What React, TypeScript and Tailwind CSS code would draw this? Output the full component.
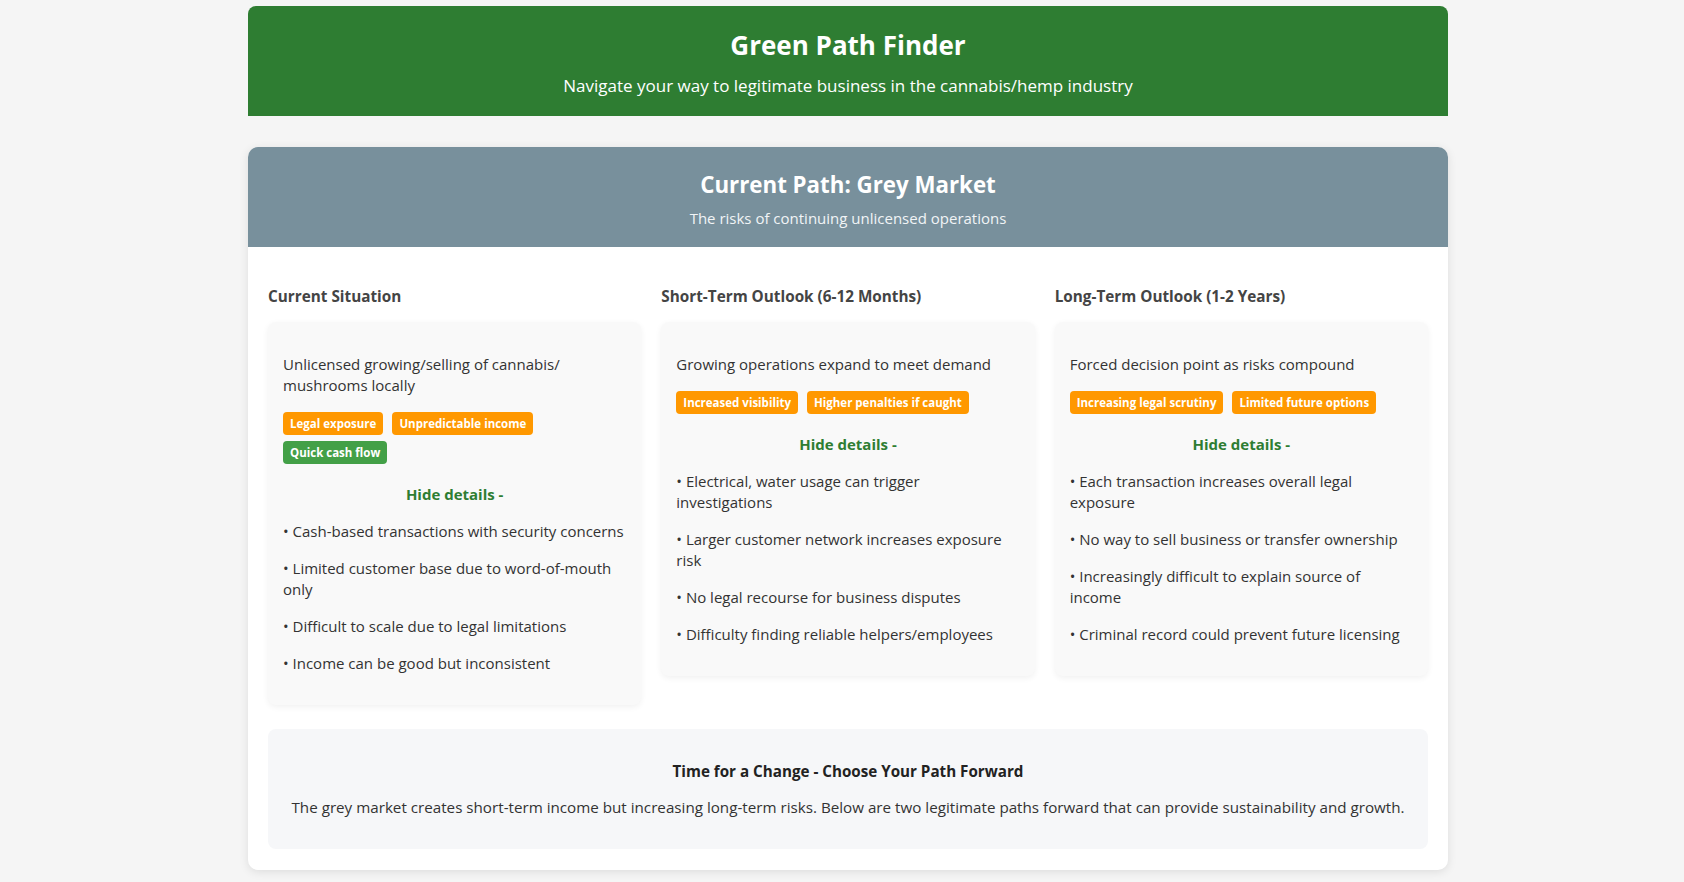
import React from "react";

type Tag = { label: string; tone: "warn" | "good" };

type Stage = {
  heading: string;
  summary: string;
  tags: Tag[];
  details: string[];
};

const stages: Stage[] = [
  {
    heading: "Current Situation",
    summary: "Unlicensed growing/selling of cannabis/ mushrooms locally",
    tags: [
      { label: "Legal exposure", tone: "warn" },
      { label: "Unpredictable income", tone: "warn" },
      { label: "Quick cash flow", tone: "good" },
    ],
    details: [
      "Cash-based transactions with security concerns",
      "Limited customer base due to word-of-mouth only",
      "Difficult to scale due to legal limitations",
      "Income can be good but inconsistent",
    ],
  },
  {
    heading: "Short-Term Outlook (6-12 Months)",
    summary: "Growing operations expand to meet demand",
    tags: [
      { label: "Increased visibility", tone: "warn" },
      { label: "Higher penalties if caught", tone: "warn" },
    ],
    details: [
      // wraps here in the original layout
      "Electrical, water usage can trigger\ninvestigations",
      "Larger customer network increases exposure risk",
      "No legal recourse for business disputes",
      "Difficulty finding reliable helpers/employees",
    ],
  },
  {
    heading: "Long-Term Outlook (1-2 Years)",
    summary: "Forced decision point as risks compound",
    tags: [
      { label: "Increasing legal scrutiny", tone: "warn" },
      { label: "Limited future options", tone: "warn" },
    ],
    details: [
      "Each transaction increases overall legal exposure",
      "No way to sell business or transfer ownership",
      "Increasingly difficult to explain source of income",
      "Criminal record could prevent future licensing",
    ],
  },
];

function StageColumn({ stage }: { stage: Stage }) {
  return (
    <div className="flex flex-col">
      <h3 className="mt-[19px] mb-[16px] text-[15.3px] leading-[20px] font-bold text-[#444]">
        {stage.heading}
      </h3>
      <div className="rounded-[8px] bg-[#f9f9f9] px-[15px] pt-[32px] pb-[31px] shadow-[0_2px_6px_rgba(0,0,0,0.06)]">
        <p className="text-[15px] leading-[21px] text-[#333]">{stage.summary}</p>
        <div className="mt-[16px] flex flex-wrap gap-x-[9px] gap-y-[6px]">
          {stage.tags.map((t) => (
            <span
              key={t.label}
              className={
                t.tone === "warn"
                  ? "rounded-[4px] bg-[#ff9800] px-[7px] text-[11.5px] leading-[23px] font-bold text-white"
                  : "rounded-[4px] bg-[#43a047] px-[7px] text-[11.5px] leading-[23px] font-bold text-white"
              }
            >
              {t.label}
            </span>
          ))}
        </div>
        <button className="mt-[20px] block w-full text-center text-[15px] leading-[21px] font-bold text-[#2e7d32]">
          Hide details -
        </button>
        <div className="mt-[16px] flex flex-col gap-[16px]">
          {stage.details.map((d) => (
            <p key={d} className="whitespace-pre-line text-[15px] leading-[21px] text-[#333]">
              • {d}
            </p>
          ))}
        </div>
      </div>
    </div>
  );
}

export default function App() {
  return (
    <div className="min-h-screen bg-[#f5f5f5] pl-3 pt-[6px] font-['Open_Sans',sans-serif]">
      <div className="mx-auto max-w-[1200px]">
        <header className="flex h-[110px] flex-col items-center rounded-t-[8px] bg-[#2e7d32] pt-[21px] text-white">
          <h1 className="text-[26px] leading-[36px] font-bold">Green Path Finder</h1>
          <p className="mt-[11px] text-[17px] leading-[24px]">
            Navigate your way to legitimate business in the cannabis/hemp industry
          </p>
        </header>

        <section className="mt-[31px] overflow-hidden rounded-[10px] bg-white shadow-[0_2px_10px_rgba(0,0,0,0.1)]">
          <div className="flex h-[100px] flex-col items-center bg-[#78909c] pt-[22px] text-white">
            <h2 className="text-[22.3px] leading-[32px] font-bold">Current Path: Grey Market</h2>
            <p className="mt-[7px] text-[15px] leading-[20px] text-[#f1f4f6]">
              The risks of continuing unlicensed operations
            </p>
          </div>

          <div className="px-[20px] pt-[20px] pb-[21px]">
            <div className="grid grid-cols-3 items-start gap-[20px]">
              {stages.map((s) => (
                <StageColumn key={s.heading} stage={s} />
              ))}
            </div>

            <div className="mt-[24px] flex h-[120px] flex-col items-center justify-center rounded-[8px] bg-[#f6f7f9] text-center">
              <h4 className="text-[15.2px] leading-[20px] font-bold text-[#222]">
                Time for a Change - Choose Your Path Forward
              </h4>
              <p className="mt-[16px] text-[15.2px] leading-[21px] text-[#333]">
                The grey market creates short-term income but increasing long-term risks. Below are two legitimate paths forward that can provide sustainability and growth.
              </p>
            </div>
          </div>
        </section>
      </div>
    </div>
  );
}
